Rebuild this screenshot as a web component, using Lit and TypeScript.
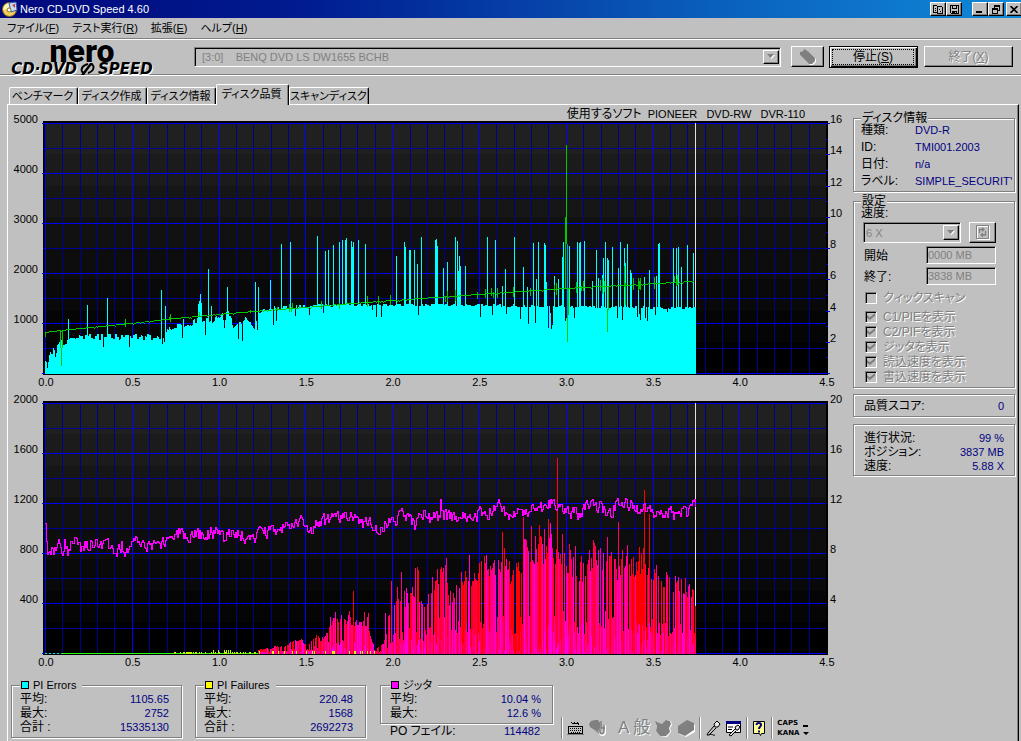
import { LitElement, html, svg, css } from "lit";
import { customElement } from "lit/decorators.js";

type Pt = [number, number];

/* ---------- chart data, in plot units: 781 wide, 250 high, y downwards ---------- */

const PIE_BASE: Pt[] = [
  [0, 240], [2, 242], [4, 231], [5, 228], [8, 228], [10, 232], [12, 223], [18, 219], [22, 217], [28, 214], [33, 213],
  [60, 214], [90, 213], [108, 214], [118, 218], [122, 204], [125, 208], [130, 202], [137, 201], [141, 203], [150, 197],
  [160, 196], [164, 200], [170, 196], [177, 191], [179, 206], [181, 190], [185, 190], [187, 204], [191, 201], [194, 201],
  [196, 201], [200, 197], [206, 200], [209, 203], [213, 189], [217, 188], [226, 185], [238, 184], [260, 183], [290, 182],
  [340, 182], [430, 182], [480, 183], [560, 184], [650, 185],
];

const PIE_SPIKES: Pt[] = [
  [23, 196], [42, 182], [62, 175], [116, 167], [120, 183], [138, 196], [153, 181], [154, 178], [155, 171], [156, 180],
  [163, 146], [166, 183], [182, 164], [210, 159], [213, 164], [225, 157], [236, 121], [245, 119], [272, 113], [280, 128],
  [283, 127], [288, 122], [294, 119], [297, 117], [300, 117], [301, 115], [306, 118], [307, 124], [308, 119], [313, 117],
  [320, 121], [351, 133], [359, 119], [360, 124], [364, 127], [365, 127], [369, 127], [372, 141], [376, 114], [390, 117],
  [391, 116], [392, 123], [398, 145], [402, 139], [410, 114], [412, 118], [413, 148], [414, 133], [415, 143], [420, 143],
  [442, 114], [450, 117], [457, 163], [460, 146], [469, 114], [478, 144], [482, 164], [488, 120], [491, 156], [493, 119],
  [499, 120], [500, 122], [501, 159], [509, 153], [513, 156], [517, 134], [518, 119], [524, 123], [532, 119], [534, 120],
  [535, 119], [539, 118], [547, 158], [551, 127], [553, 155], [557, 152], [558, 135], [560, 119], [562, 135], [563, 137],
  [567, 124], [573, 145], [575, 119], [579, 125], [580, 140], [582, 121], [585, 147], [586, 150], [593, 166], [599, 154],
  [604, 147], [611, 153], [613, 121], [614, 120], [628, 125], [631, 125], [633, 124], [636, 144], [642, 122], [648, 130],
  [58, 224], [84, 224], [160, 212], [137, 215], [117, 221], [119, 219], [193, 216], [197, 218], [212, 207], [228, 202],
  [231, 198], [250, 193], [264, 192], [278, 190], [327, 187], [331, 194], [336, 194], [373, 192], [435, 194], [447, 192],
  [461, 191], [475, 196], [483, 201], [490, 200], [503, 205], [505, 190], [506, 206], [507, 202], [520, 198], [521, 195],
  [529, 195], [572, 195], [577, 197], [592, 194], [594, 191], [595, 197], [600, 195], [602, 198], [610, 192], [622, 189],
];

const SPEED_BASE: Pt[] = [
  [0, 209], [15, 207], [45, 204], [86, 200], [130, 195], [173, 191], [220, 187], [260, 184], [294, 181], [347, 177],
  [433, 171], [520, 165], [648, 158],
];

/* x, top, bottom of each sudden change of the reading speed */
const SPEED_TICKS: [number, number, number][] = [
  [0, 209, 214], [15, 207, 225], [16, 225, 243], [17, 207, 225], [80, 196, 204], [79, 200, 202], [125, 191, 199], [124, 194, 197],
  [154, 189, 193], [205, 187, 190], [232, 184, 188], [244, 181, 189], [246, 184, 189], [247, 180, 185], [276, 178, 186],
  [294, 180, 186], [322, 173, 184], [333, 173, 181], [345, 172, 182], [400, 173, 179], [402, 168, 179], [410, 167, 178],
  [432, 169, 176], [440, 166, 175], [446, 165, 173], [448, 169, 175], [452, 165, 175], [468, 164, 174], [485, 165, 173],
  [509, 162, 169], [511, 160, 172], [520, 94, 166], [521, 22, 121], [522, 121, 219], [523, 165, 192], [531, 159, 170],
  [536, 163, 168], [538, 158, 168], [555, 157, 168], [557, 155, 171], [559, 158, 169], [562, 186, 209], [563, 163, 187],
  [579, 143, 164], [580, 160, 182], [588, 155, 167], [593, 155, 167], [594, 158, 166], [595, 155, 167], [609, 154, 166],
  [629, 153, 160], [632, 152, 162], [631, 156, 163],
];

const JITTER_BASE: Pt[] = [
  [0, 120], [1, 142], [2, 151], [7, 149], [11, 143], [14, 140], [17, 147], [19, 135], [22, 149], [26, 142], [30, 135],
  [35, 143], [50, 139], [60, 140], [70, 149], [76, 142], [80, 149], [86, 137], [100, 141], [110, 142], [120, 136],
  [130, 132], [134, 128], [138, 137], [145, 132], [160, 131], [173, 127], [178, 134], [190, 131], [200, 133], [210, 134],
  [218, 128], [228, 129], [235, 124], [245, 124], [255, 118], [264, 125], [275, 119], [285, 116], [295, 115], [305, 115],
  [315, 119], [325, 117], [332, 130], [342, 120], [350, 117], [354, 108], [365, 114], [369, 126], [373, 111], [379, 109],
  [385, 115], [394, 111], [395, 99], [397, 113], [405, 114], [415, 111], [430, 116], [434, 106], [443, 111], [452, 101],
  [455, 102], [463, 114], [475, 107], [485, 108], [494, 102], [500, 107], [507, 98], [511, 110], [515, 102], [525, 109],
  [535, 110], [540, 104], [555, 104], [566, 111], [572, 98], [575, 102], [587, 100], [593, 108], [600, 105], [604, 97],
  [608, 114], [620, 106], [628, 111], [637, 105], [641, 110], [646, 103], [650, 98],
];

const PIF_ENVELOPE: Pt[] = [
  [213, 246], [225, 245], [232, 242], [240, 243], [246, 238], [256, 236], [264, 240], [270, 230], [275, 236], [280, 228],
  [284, 220], [290, 212], [300, 213], [310, 216], [318, 218], [323, 214], [326, 236], [332, 244], [338, 240], [342, 226],
  [346, 200], [350, 195], [355, 190], [362, 188], [370, 178], [378, 195], [386, 175], [395, 160], [401, 158], [404, 190],
  [412, 170], [422, 160], [430, 165], [440, 148], [450, 150], [457, 140], [464, 158], [472, 155], [478, 138], [488, 136],
  [496, 132], [505, 128], [512, 142], [520, 142], [530, 152], [540, 158], [548, 140], [560, 144], [570, 154], [580, 146],
  [590, 156], [598, 146], [606, 160], [614, 172], [622, 166], [634, 174], [645, 180], [650, 190],
];

const PIF_SPIKES: Pt[] = [
  [285, 214], [290, 209], [303, 212], [308, 188], [304, 208], [319, 209], [323, 210], [340, 210], [343, 213], [346, 178],
  [352, 184], [356, 169], [361, 185], [370, 165], [372, 164], [373, 167], [395, 166], [400, 162], [401, 155], [424, 152],
  [457, 129], [478, 114], [486, 123], [494, 122], [499, 126], [503, 116], [505, 120], [512, 55], [517, 131], [524, 141],
  [530, 143], [536, 153], [548, 137], [549, 140], [562, 134], [565, 153], [573, 119], [577, 147], [582, 142], [594, 144],
  [599, 87], [604, 111], [611, 162], [621, 169], [640, 175],
];

const BANDS = ["#202020", "#1b1b1b", "#161616", "#111111", "#0d0d0d", "#090909", "#050505", "#000000"];
const END = 650;

function rng(seed: number) {
  let s = seed;
  return () => {
    s = (s * 1664525 + 1013904223) % 4294967296;
    return s / 4294967296;
  };
}

function at(points: Pt[], x: number): number {
  for (let i = 1; i < points.length; i++) {
    const [x0, y0] = points[i - 1];
    const [x1, y1] = points[i];
    if (x <= x1) return y0 + ((y1 - y0) * (x - x0)) / (x1 - x0);
  }
  return points[points.length - 1][1];
}

const bar = (x: number, top: number, bottom = 251) => `M${x} ${top}h1V${bottom}h-1z`;

function errorBars(): string {
  const rand = rng(7);
  const tops = new Map<number, number>(PIE_SPIKES);
  let path = "";
  let held = 0;
  for (let x = 0; x <= END; x++) {
    const amp = x < 215 ? 7 : 3;
    if (x % 2 === 0) held = (rand() - 0.5) * amp;
    path += bar(x, tops.get(x) ?? Math.round(at(PIE_BASE, x) + held));
  }
  return path;
}

function speedLine(): string {
  const rand = rng(21);
  let path = "";
  for (let x = 0; x <= 648; x++) {
    const y = Math.round(at(SPEED_BASE, x) + (rand() > 0.9 ? 1 : 0));
    path += bar(x, y, y + 1);
  }
  for (const [x, top, bottom] of SPEED_TICKS) path += bar(x, top, bottom);
  return path;
}

function jitterLine(): string {
  const rand = rng(99);
  let path = "";
  let prev = 120;
  let drift = 0;
  for (let x = 0; x <= END; x++) {
    drift = drift * 0.3 + (rand() - 0.5) * 12;
    const y = x === 0 ? 120 : Math.round(at(JITTER_BASE, x) + drift);
    path += bar(x, Math.min(prev, y), Math.max(prev, y) + 1);
    prev = y;
  }
  return path;
}

function failureBars(): { color: string; d: string }[] {
  const rand = rng(1234);
  const colors = ["#ff0000", "#ff0030", "#ff0060", "#ff0090", "#ff00d8"];
  const paths = colors.map(() => "");
  const spikes = new Map<number, number>(PIF_SPIKES);
  for (let x = 213; x <= END; x++) {
    const env = at(PIF_ENVELOPE, x);
    const height = 250 - env;
    const dense = x > 475 && x < 535 ? 0.84 : x > 575 && x < 605 ? 0.8 : x < 330 ? 0.8 : 0.68;
    const tall = rand() < dense;
    const share = tall ? 0.75 + rand() * 0.27 : 0.2 + rand() * 0.2;
    const top = spikes.get(x) ?? Math.round(250 - height * share);
    let tone = Math.floor(rand() * 5);
    if ((x > 465 && x < 476) || (x > 590 && x < 600)) tone = 0;
    paths[tone] += bar(x, top);
    const foot = Math.floor(rand() * 5);
    const low = Math.round(250 - Math.min(32, height * 0.35) * rand());
    if (low > top) paths[foot] += bar(x, low);
  }
  return colors.map((color, i) => ({ color, d: paths[i] }));
}

function floorMarks(): { green: string; yellow: string } {
  const rand = rng(5);
  let green = "";
  let yellow = "";
  for (let x = 0; x < 335; x++) {
    if (x < 213 && (x > 15 || x % 4 < 2)) green += bar(x, 250);
    if (x > 127 && x < 213 && rand() > 0.5) {
      const peak = x > 160 && x < 187 ? 3 : 1;
      yellow += bar(x, 249 - Math.floor(rand() * peak));
    } else if (x > 213 && rand() > 0.82) yellow += bar(x, 248);
  }
  return { green, yellow };
}

function grid(rightTicks: number) {
  const xs = Array.from({ length: 46 }, (_, i) => i);
  const ys = Array.from({ length: 11 }, (_, i) => i);
  const rt = rightTicks ? Array.from({ length: rightTicks + 1 }, (_, i) => i) : [];
  return svg`
    <rect x="-2" y="-2" width="785" height="254" fill="#000"></rect>
    ${BANDS.map((c, i) => svg`<rect x="0" y=${Math.round(i * 31.25)} width="781" height="32" fill=${c}></rect>`)}
    ${ys.filter((i) => i % 2).map((i) => svg`<rect x="-2" y=${i * 25} width="783" height="1" fill="#000098"></rect>`)}
    ${xs.filter((i) => i % 5).map((i) => svg`<rect x=${Math.round(i * 17.36)} y="0" width="1" height="251" fill="#000088"></rect>`)}
    ${ys.filter((i) => i % 2 === 0).map((i) => svg`<rect x="-3" y=${i * 25} width="784" height="1" fill="#0000f0"></rect>`)}
    ${xs.filter((i) => i % 5 === 0 && i < 45).map((i) => svg`<rect x=${Math.round(i * 17.36)} y="0" width="1" height="251" fill="#0000ff"></rect>`)}
    ${rt.map((i) => svg`<rect x="781" y=${Math.round((i * 250) / rightTicks)} width=${i % 2 ? 2 : 4} height="1" fill="#0000e0"></rect>`)}
    <rect x=${END} y="0" width="1" height="250" fill="#e0e0e0"></rect>`;
}

@customElement("cd-scan-charts")
export class ScanCharts extends LitElement {
  static styles = css`
    :host {
      flex: 1;
      display: grid;
      grid-template-columns: 34px minmax(0, 1fr) 23px;
      grid-template-rows: 16px minmax(0, 1fr) 26px minmax(0, 1fr) 26px;
      font-size: 11px;
      line-height: 12px;
    }
    .drive { grid-area: 1 / 2; text-align: right; padding-right: 25px; line-height: 18px; white-space: pre; }
    .jp { font-size: 12px; }
    .plot { display: block; width: 100%; height: 100%; min-height: 0; }
    .upper { grid-area: 2 / 2; }
    .lower { grid-area: 4 / 2; }
    .data { shape-rendering: crispEdges; }
    .axis { display: flex; flex-direction: column; padding: 8px 0 12px; }
    .axis span { flex: 1; }
    .left { text-align: right; padding-right: 4px; }
    .axis.second { padding-top: 18px; }
    .l1 { grid-area: 1 / 1 / 3 / 2; }
    .r1 { grid-area: 1 / 3 / 3 / 4; }
    .l2 { grid-area: 3 / 1 / 5 / 2; }
    .r2 { grid-area: 3 / 3 / 5 / 4; }
    .scale { display: flex; justify-content: space-between; margin: 1px -7px 0 -6px; text-align: center; }
    .scale span { width: 20px; }
    .s1 { grid-area: 3 / 2; }
    .s2 { grid-area: 5 / 2; }
  `;

  private bars = failureBars();
  private marks = floorMarks();

  private axis(cls: string, labels: number[]) {
    return html`<div class="axis ${cls}">${labels.map((l) => html`<span>${l}</span>`)}</div>`;
  }

  private scale(cls: string) {
    return html`<div class="scale ${cls}">
      ${Array.from({ length: 10 }, (_, i) => html`<span>${(i / 2).toFixed(1)}</span>`)}
    </div>`;
  }

  render() {
    return html`
      <div class="drive"><span class="jp">使用するソフト</span>  PIONEER   DVD-RW   DVR-110</div>
      ${this.axis("left l1", [5000, 4000, 3000, 2000, 1000])}
      <svg class="plot upper" viewBox="-3 -2 788 254" preserveAspectRatio="none" role="img" aria-label="PI Errors">
        ${grid(16)}
        <g class="data">
          <path d=${errorBars()} fill="#00ffff"></path>
          <path d=${speedLine()} fill="#00c800"></path>
        </g>
        <rect x="0" y="251" width="783" height="1" fill="#000"></rect>
      </svg>
      ${this.axis("r1", [16, 14, 12, 10, 8, 6, 4, 2])}
      ${this.scale("s1")}
      ${this.axis("left second l2", [2000, 1600, 1200, 800, 400])}
      <svg class="plot lower" viewBox="-3 -2 788 254" preserveAspectRatio="none" role="img" aria-label="PI Failures">
        ${grid(0)}
        <g class="data">
          <path d=${this.marks.green} fill="#20ff00"></path>
          ${this.bars.map((b) => svg`<path d=${b.d} fill=${b.color}></path>`)}
          <path d=${this.marks.yellow} fill="#c8ff00"></path>
          <path d=${jitterLine()} fill="#ff00ff"></path>
        </g>
      </svg>
      ${this.axis("second r2", [20, 16, 12, 8, 4])}
      ${this.scale("s2")}
    `;
  }
}

const stat = (label: string, value: string) =>
  html`<div class="stat"><dt>${label}</dt><dd>${value}</dd></div>`;

const arrow = html`<span class="drop"><svg width="8" height="5" viewBox="0 0 8 5"><path d="M1 1h7l-3.500 4z" fill="#fff"></path><path d="M0 0h7L3.500 4z" fill="#808080"></path></svg></span>`;

@customElement("app-root")
export class AppRoot extends LitElement {
  static styles = css`
    :host {
      display: flex;
      flex-direction: column;
      min-height: 100vh;
      background: #c0c0c0;
      color: #000;
      font-family: "Liberation Sans", "Noto Sans CJK JP", sans-serif;
      font-size: 12px;
      line-height: 14px;
      font-feature-settings: "palt";
      overflow: hidden;
    }
    * { box-sizing: border-box; }
    button, select, input { font: inherit; font-feature-settings: inherit; color: inherit; margin: 0; border-radius: 0; }
    button { background: #c0c0c0; padding: 0; }
    svg { display: block; flex: none; }
    dl, dd { margin: 0; }

    .title {
      display: flex; align-items: center; height: 18px; padding-left: 2px; gap: 2px; flex: none;
      background: linear-gradient(90deg, #00087c, #001c90 30%, #0a60bc 70%, #1088d8);
      color: #fff; font-size: 11px;
    }
    .title h1 { flex: 1; margin: 0; font: inherit; }
    .caps { display: flex; }
    .caps + .caps { margin: 0 -1px 0 8px; }
    .cap, .raised {
      display: flex; align-items: center; justify-content: center;
      border: 1px solid; border-color: #fff #000 #000 #fff; box-shadow: inset -1px -1px #808080;
    }
    .cap { width: 16px; height: 14px; }
    .close { margin-left: 2px; }

    .menu { display: flex; gap: 13px; height: 20px; padding-left: 7px; align-items: center; flex: none; }
    .menu button { border: 0; font-size: 11px; line-height: 12px; }

    .toolbar {
      display: flex; align-items: center; height: 37px; padding-right: 8px; flex: none;
      border-top: 1px solid #808080; border-bottom: 1px solid #808080; box-shadow: inset 0 1px #fff, 0 1px #fff;
    }
    .logo { width: 184px; padding: 2px 20px 0 0; text-align: center; flex: none; margin-right: 10px; }
    .nero { font: 900 32px/22px Roboto, sans-serif; text-shadow: 0 0 1px #fff; }
    .cdspeed {
      display: flex; justify-content: center; align-items: center; gap: 3px;
      font: italic bold 15px/14px "DejaVu Sans", sans-serif; text-shadow: 1px 1px #fff;
    }
    .combo {
      display: flex; height: 20px; border: 1px solid; border-color: #808080 #fff #fff #808080;
      box-shadow: inset 1px 1px #000; padding: 1px;
    }
    .combo select {
      flex: 1; min-width: 0; appearance: none; border: 0; background: none; color: #808080; opacity: 1;
      padding: 0 6px; font-size: 11px; white-space: pre;
    }
    .drop {
      display: flex; align-items: center; justify-content: center; width: 16px; margin: 1px 0;
      border: 1px solid; border-color: #fff #000 #000 #fff; box-shadow: inset -1px -1px #808080;
    }
    .drives { flex: 1; }
    .erase { width: 33px; height: 21px; margin-left: 10px; }
    .stop { width: 89px; height: 22px; margin-left: 5px; border: 1px solid #000; padding: 1px; box-shadow: inset 1px 1px #fff, inset -1px -1px #000, inset -2px -2px #808080; }
    .stop span { display: block; border: 1px dotted #000; margin: 1px 2px 2px 1px; line-height: 14px; }
    .quit { width: 89px; height: 21px; margin-left: 6px; }
    .off { color: #808080; text-shadow: 1px 1px #fff; }

    .tabs { display: flex; align-items: flex-end; height: 29px; padding-left: 9px; flex: none; }
    .tab {
      width: 69px; height: 17px; border: 1px solid; border-color: #fff #000 transparent #fff; border-bottom: 0;
      border-radius: 2px 2px 0 0; box-shadow: inset -1px 0 #808080; font-size: 11px; white-space: nowrap; padding-right: 2px;
    }
    .tab.on { width: 73px; height: 21px; margin-bottom: -1px; position: relative; padding-bottom: 3px; }
    .tab.wide { width: 80px; }
    .panel {
      flex: 1; display: flex; margin: 0 2px 0 7px; border-left: 1px solid #fff; border-top: 1px solid #fff;
      border-right: 1px solid #000; box-shadow: inset -1px 0 #808080;
    }
    .main { flex: 1; display: flex; flex-direction: column; min-width: 0; }

    .group {
      min-width: 0; margin: 0; padding: 0; border: 1px solid #808080;
      box-shadow: 1px 1px #fff, inset 1px 1px #fff;
    }
    legend { background: #c0c0c0; padding: 0 1px; line-height: 14px; height: 14px; white-space: nowrap; }
    .key { display: flex; align-items: center; gap: 4px; padding: 0 6px 0 1px; font-size: 11px; }
    .swatch { width: 8px; height: 8px; border: 1px solid #000; }
    .cyan { background: #0ff; }
    .yellow { background: #ff0; }
    .magenta { background: #f0f; }

    .stat { display: flex; justify-content: space-between; white-space: nowrap; }
    .stat dd { color: #000080; font-size: 11px; }

    .bottom { display: flex; height: 60px; padding-left: 3px; gap: 13px; flex: none; }
    .total { width: 171px; flex: none; padding: 0 12px 0 8px; height: 60px; margin-top: -3px; }
    .jitter { width: 173px; flex: none; margin: -3px 0 0 1px; }
    .jitter .group { padding: 0 11px 2px 9px; height: 46px; }
    .po { padding: 0 13px 0 10px; }

    .side { width: 162px; flex: none; margin-right: 3px; padding-top: 6px; }
    .info { height: 81px; padding: 0 2px 0 7px; margin-bottom: 2px; }
    .info dl { margin-top: -3px; }
    .info .stat { justify-content: flex-start; height: 17px; line-height: 17px; }
    .info dt { width: 54px; flex: none; }
    .info dd { overflow: hidden; }
    .settings { padding: 0 7px 4px 7px; height: 194px; }
    .speedlabel { display: block; line-height: 14px; margin-top: -2px; }
    .speedrow { display: flex; justify-content: space-between; align-items: center; width: 133px; margin: 2px 0 3px 2px; }
    .speedrow .combo { width: 98px; height: 21px; }
    .speedrow .combo select { padding: 0 1px; }
    .refresh { width: 27px; height: 21px; }
    .field { display: flex; justify-content: space-between; width: 132px; margin: 0 0 2px 3px; height: 19px; line-height: 20px; }
    .field input {
      width: 70px; height: 18px; border: 1px solid; border-color: #808080 #fff #fff #808080; background: none;
      box-shadow: inset 1px 1px #000; color: #808080; font-size: 11px; padding: 0 1px;
    }
    .check { display: flex; align-items: center; gap: 6px; height: 15px; margin-left: 4px; }
    .check.first { height: 19px; margin-bottom: 2px; }
    .check input {
      appearance: none; width: 12px; height: 12px; margin: 0; border: 1px solid;
      border-color: #808080 #fff #fff #808080; box-shadow: inset 1px 1px #000; display: grid; place-items: center;
    }
    .check input:checked::before {
      content: ""; width: 8px; height: 7px; background: #808080;
      clip-path: polygon(0 30%, 35% 62%, 100% 0, 100% 38%, 35% 100%, 0 68%);
    }
    .score { height: 23px; margin: 6px 0 7px; padding: 4px 10px 0; }
    .progress { height: 52px; padding: 6px 10px 0; }

    .tray { display: flex; align-items: center; gap: 4px; align-self: flex-end; height: 26px; margin-left: -5px; flex: none; }
    .bar { width: 2px; height: 22px; border-left: 1px solid #808080; border-right: 1px solid #fff; }
    .space { width: 4px; }
    .mode { font-size: 17px; line-height: 20px; }
    .keys { font: bold 7px/10px "DejaVu Sans", sans-serif; }
  `;

  private tray() {
    return html`<div class="tray">
      <span class="bar"></span>
      <svg width="17" height="16" viewBox="0 0 17 16" shape-rendering="crispEdges"><path d="M4 2h1v1h2v-1h1v1h2v-1h1v1h1v2h-1v-1H5v-1H4z" fill="#000"></path><path d="M1.500 6.500h14v7h-14z" fill="#c0c0c0" stroke="#000"></path><path d="M3 8.500h11M3 10.500h11M4 12.500h9" stroke="#000" stroke-dasharray="1 1"></path><path d="M0 14.500h17" stroke="#808080"></path></svg>
      <svg width="18" height="18" viewBox="0 0 18 18"><path d="M11 13c1 4 6 4 6 0V6" fill="none" stroke="#fff" stroke-width="2"></path><path d="M1 5l2-3 4-1h3l2 3v5l-2 3 2 4-4-4-3-2-3-2z" fill="#808080"></path><path d="M12 10c-1 6 4 6 4 2V6M13 2v7h4" fill="none" stroke="#808080" stroke-width="1.500"></path></svg>
      <span class="space"></span>
      <span class="mode off">A</span>
      <span class="mode off">般</span>
      <svg width="19" height="18" viewBox="0 0 19 18"><path d="M2 3l4 2 3 1 4-5 4 1 1 4-2 3 1 4-4 5-7-1-4-5 1-5z" fill="#fff"></path><path d="M1 2l4 2 3 1 4-4 4 1 1 3-2 4 1 4-4 4-6 0-4-5 1-5z" fill="#808080"></path></svg>
      <svg width="18" height="18" viewBox="0 0 18 18"><path d="M2 9l9-6 7 3v7l-9 5-7-3z" fill="#fff"></path><path d="M1 7l9-6 7 3v7l-9 6-7-3z" fill="#808080"></path></svg>
      <span class="bar"></span>
      <svg width="16" height="17" viewBox="0 0 16 17"><path d="M9 4l3-3 3 3-2 3-3 0z" fill="#e8e8e8" stroke="#000"></path><path d="M9 6l-6 7-1 2 2 0 7-7M4 15c3-2 4 1 6 0" fill="none" stroke="#000"></path></svg>
      <svg width="17" height="17" viewBox="0 0 17 17"><path d="M1.500 1.500h14v11h-14z" fill="#fff" stroke="#000"></path><path d="M1 1h15v3H1z" fill="#000080"></path><path d="M3 7h5M3 9.500h4" stroke="#000"></path><path d="M10 7l3-2 2 2-2 3h-2zM10 9l-6 6 2 1 5-5" fill="#ddd" stroke="#000"></path></svg>
      <span class="bar"></span>
      <svg width="15" height="16" viewBox="0 0 15 16"><path d="M1.500 1.500h11v12h-3l-1 2-1-2h-6z" fill="#ffff90" stroke="#000"></path><path d="M4.500 5c0-3 5-2.500 4.500 0 0 2-2 1.500-2 4M7 10.500v2" fill="none" stroke="#000080" stroke-width="2"></path></svg>
      <span class="bar"></span>
      <span class="keys">CAPS<br />KANA</span>
      <svg width="6" height="16" viewBox="0 0 6 16"><path d="M0 5h5v2H0zM0 12h6l-3 3z" fill="#000"></path></svg>
    </div>`;
  }

  private check(label: string, on: boolean, cls = "") {
    return html`<label class="check off ${cls}"><input type="checkbox" disabled .checked=${on} />${label}</label>`;
  }

  render() {
    return html`
      <header class="title">
        <svg width="16" height="16" viewBox="0 0 16 16"><circle cx="7.500" cy="8.500" r="7" fill="#f0d060" stroke="#806000"></circle><path d="M1 9a7 7 0 0 1 6-7l1 6z" fill="#fff4b0"></path><path d="M7 2l7-1 1 8-6 2z" fill="#c8dcf8" stroke="#3858a8"></path><path d="M10 4l3-1v4z" fill="#d03828"></path><circle cx="7" cy="9" r="2" fill="#fff" stroke="#907020"></circle></svg>
        <h1>Nero CD-DVD Speed 4.60</h1>
        <div class="caps">
          <button class="cap" aria-label="Copy"><svg width="10" height="9" viewBox="0 0 10 9" shape-rendering="crispEdges"><path d="M.5.5h3l1 1v6h-4zM4.500 1.500h4l1 1v6h-5z" fill="#c0c0c0" stroke="#000"></path><path d="M6 4h1v1H6zM7 6h1v1H7zM2 3h1v1H2zM2 5h1v1H2z" fill="#000"></path></svg></button>
          <button class="cap" aria-label="Save"><svg width="9" height="9" viewBox="0 0 9 9" shape-rendering="crispEdges"><path d="M.5.5h8v8h-7l-1-1z" fill="none" stroke="#000"></path><path d="M2 1h5v3H2zM2 6h5v3H2z" fill="#000"></path><path d="M3 1h3v2H3zM5 7h1v1H5z" fill="#c0c0c0"></path></svg></button>
        </div>
        <div class="caps">
          <button class="cap" aria-label="Minimize"><svg width="8" height="8" viewBox="0 0 8 8"><path d="M0 6h6v2H0z"></path></svg></button>
          <button class="cap" aria-label="Restore"><svg width="9" height="9" viewBox="0 0 9 9" shape-rendering="crispEdges"><path d="M2 0h6v6H6V5h1V2H3v1H2zM0 3h6v6H0zM1 5v3h4V5z" fill-rule="evenodd"></path></svg></button>
          <button class="cap close" aria-label="Close"><svg width="8" height="7" viewBox="0 0 8 7"><path d="M.5 0l7 7M7.500 0l-7 7" stroke="#000" stroke-width="1.600"></path></svg></button>
        </div>
      </header>

      <nav class="menu">
        <button>ファイル(<u>F</u>)</button>
        <button>テスト実行(<u>R</u>)</button>
        <button>拡張(<u>E</u>)</button>
        <button>ヘルプ(<u>H</u>)</button>
      </nav>

      <div class="toolbar">
        <div class="logo">
          <div class="nero">nero</div>
          <div class="cdspeed"><span>CD·DVD</span><svg width="15" height="12" viewBox="0 0 15 12"><path d="M1 12L10 0h3L4 12z"></path><path d="M8 1c-8 2-8 9-3 9M8 10c7-2 7-9 2-9" fill="none" stroke="#000" stroke-width="2"></path></svg><span>SPEED</span></div>
        </div>
        <div class="combo drives"><select disabled aria-label="Drive"><option>[3:0]&nbsp;&nbsp;&nbsp;&nbsp;BENQ DVD LS DW1655 BCHB</option></select>${arrow}</div>
        <button class="raised erase" disabled aria-label="Erase"><svg width="18" height="16" viewBox="0 0 18 16"><path d="M2 3l3-2 2 1 3 1 7 7v3l-3 3h-3L5 10 3 8 1 6z" fill="#fff"></path><path d="M1 3l3-1 1-2 2 1 3 2 6 6v3l-3 3h-3L5 10 1 6z" fill="#808080"></path></svg></button>
        <button class="stop"><span>停止(<u>S</u>)</span></button>
        <button class="raised quit off" disabled>終了(<u>X</u>)</button>
      </div>

      <div class="tabs" role="tablist">
        <button class="tab" role="tab">ベンチマーク</button>
        <button class="tab" role="tab">ディスク作成</button>
        <button class="tab" role="tab">ディスク情報</button>
        <button class="tab on" role="tab" aria-selected="true">ディスク品質</button>
        <button class="tab wide" role="tab">スキャンディスク</button>
      </div>

      <section class="panel">
        <div class="main">
          <cd-scan-charts></cd-scan-charts>
          <div class="bottom">
            <fieldset class="group total">
              <legend class="key"><span class="swatch cyan"></span>PI Errors</legend>
              <dl>${stat("平均:", "1105.65")}${stat("最大:", "2752")}${stat("合計 :", "15335130")}</dl>
            </fieldset>
            <fieldset class="group total">
              <legend class="key"><span class="swatch yellow"></span>PI Failures</legend>
              <dl>${stat("平均:", "220.48")}${stat("最大:", "1568")}${stat("合計 :", "2692273")}</dl>
            </fieldset>
            <div class="jitter">
              <fieldset class="group">
                <legend class="key"><span class="swatch magenta"></span>ジッタ</legend>
                <dl>${stat("平均:", "10.04 %")}${stat("最大:", "12.6 %")}</dl>
              </fieldset>
              <dl class="po">${stat("PO フェイル:", "114482")}</dl>
            </div>
            ${this.tray()}
          </div>
        </div>

        <aside class="side">
          <fieldset class="group info">
            <legend>ディスク情報</legend>
            <dl>${stat("種類:", "DVD-R")}${stat("ID:", "TMI001.2003")}${stat("日付:", "n/a")}${stat("ラベル:", "SIMPLE_SECURITY")}</dl>
          </fieldset>
          <fieldset class="group settings">
            <legend>設定</legend>
            <label class="speedlabel" for="speed">速度:</label>
            <div class="speedrow">
              <div class="combo"><select id="speed" disabled><option>6 X</option></select>${arrow}</div>
              <button class="raised refresh" disabled aria-label="Refresh"><svg width="14" height="15" viewBox="0 0 14 15"><path d="M1.500 1.500h12v13h-12z" fill="none" stroke="#fff"></path><path d="M.5.500h12v13H.5z" fill="none" stroke="#808080"></path><path d="M3.500 8V4.500h4M9.500 6v4h-4" fill="none" stroke="#808080" stroke-width="1.300"></path><path d="M6 2l3 2.500L6 7zM7 7.500L4 10l3 2.500z" fill="#808080"></path></svg></button>
            </div>
            <div class="field"><label for="from">開始</label><input id="from" disabled value="0000 MB" /></div>
            <div class="field"><label for="to">終了:</label><input id="to" disabled value="3838 MB" /></div>
            ${this.check("クィックスキャン", false, "first")}
            ${this.check("C1/PIEを表示", true)}
            ${this.check("C2/PIFを表示", true)}
            ${this.check("ジッタを表示", true)}
            ${this.check("読込速度を表示", true)}
            ${this.check("書込速度を表示", true)}
          </fieldset>
          <dl class="group score">${stat("品質スコア:", "0")}</dl>
          <dl class="group progress">${stat("進行状況:", "99 %")}${stat("ポジション:", "3837 MB")}${stat("速度:", "5.88 X")}</dl>
        </aside>
      </section>
    `;
  }
}
